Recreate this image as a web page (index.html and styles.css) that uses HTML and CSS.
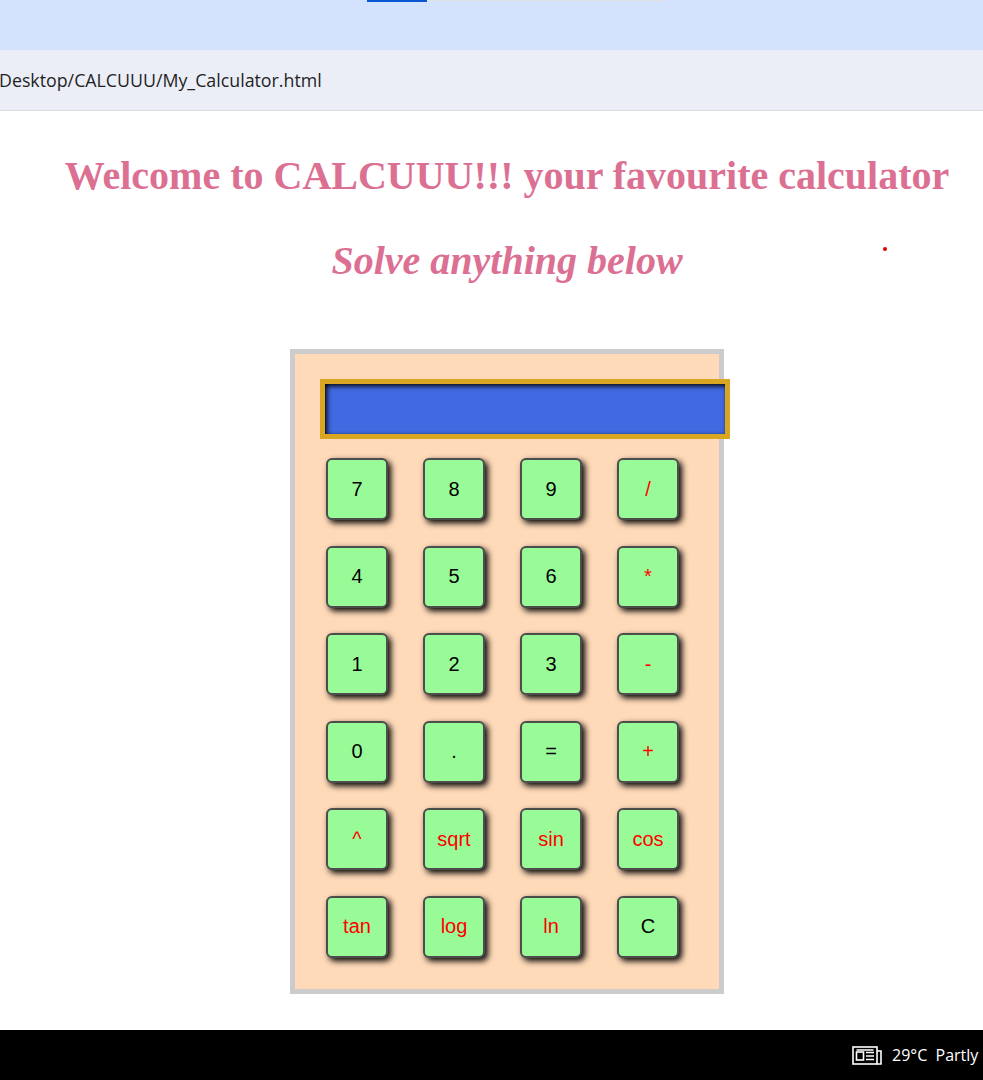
FILE: index.html
```html
<!DOCTYPE html>
<html>
<head>
<meta charset="utf-8">
<title>CALCUUU</title>
<link rel="stylesheet" href="styles.css">
</head>
<body>
<div class="tabstrip">
  <span class="tab-active"></span><span class="tab-rest"></span>
</div>
<div class="addressbar">
  <span class="url">Desktop/CALCUUU/My_Calculator.html</span>
</div>
<main class="page">
  <span class="dot"></span>
  <h1 class="title">Welcome to CALCUUU!!! your favourite calculator</h1>
  <h2 class="subtitle">Solve anything below</h2>
  <div class="calc">
    <div class="display"></div>
    <div class="keys">
      <button class="key">7</button>
      <button class="key">8</button>
      <button class="key">9</button>
      <button class="key op">/</button>
      <button class="key">4</button>
      <button class="key">5</button>
      <button class="key">6</button>
      <button class="key op">*</button>
      <button class="key">1</button>
      <button class="key">2</button>
      <button class="key">3</button>
      <button class="key op">-</button>
      <button class="key">0</button>
      <button class="key">.</button>
      <button class="key">=</button>
      <button class="key op">+</button>
      <button class="key op">^</button>
      <button class="key op">sqrt</button>
      <button class="key op">sin</button>
      <button class="key op">cos</button>
      <button class="key op">tan</button>
      <button class="key op">log</button>
      <button class="key op">ln</button>
      <button class="key">C</button>
    </div>
  </div>
</main>
<footer class="taskbar">
  <svg class="news" width="30" height="19" viewBox="0 0 30 19" fill="none" stroke="#fff" stroke-width="1.6">
    <rect x="1" y="1" width="24" height="17"/>
    <path d="M25 5h4v13h-4"/>
    <rect x="4.5" y="6" width="7" height="8"/>
    <path d="M14 6.5h8M14 10h8M14 13.5h8M4.5 4h17"/>
  </svg>
  <span class="weather">29°C&nbsp; Partly</span>
</footer>
</body>
</html>
```
FILE: styles.css
```css
html, body {
  margin: 0;
  padding: 0;
  background: #fff;
  overflow: hidden;
}
.tabstrip {
  height: 50px;
  background: #d3e3fd;
  display: flex;
  align-items: flex-start;
  padding-left: 367px;
  box-sizing: border-box;
}
.tab-active {
  width: 60px;
  height: 2px;
  background: #0b57d0;
}
.tab-rest {
  width: 238px;
  height: 1px;
  background: #e3e3e3;
}
.addressbar {
  height: 60px;
  background: #ebeef7;
  border-bottom: 1px solid #dadce0;
  display: flex;
  align-items: center;
}
.url {
  font-family: "Open Sans", "Noto Sans", sans-serif;
  font-size: 17.8px;
  color: #1f1f1f;
  margin-left: -1px;
  margin-top: -1px;
}
.page {
  position: relative;
  height: 919px;
  padding-left: 31px;
  box-sizing: border-box;
  overflow: hidden;
}
.dot {
  position: absolute;
  left: 883px;
  top: 136px;
  width: 4px;
  height: 4px;
  border-radius: 50%;
  background: #e00000;
}
.title, .subtitle {
  font-family: "Liberation Serif", "Times New Roman", serif;
  color: #db7093;
  text-align: center;
  font-size: 40px;
  line-height: 48px;
  font-weight: bold;
  margin: 0;
}
.title {
  padding-top: 41px;
}
.subtitle {
  font-style: italic;
  margin-top: 37px;
}
.calc {
  width: 434px;
  height: 645px;
  margin: 64px auto 0;
  border: 5px solid #cccccc;
  background: #ffdab9;
  padding: 25px 0 0 25px;
  box-sizing: border-box;
}
.display {
  width: 410px;
  height: 60px;
  box-sizing: border-box;
  border: 5px solid #daa520;
  background: #4169e1;
  box-shadow: inset 2px 2px 5px #000;
  margin-bottom: 19px;
}
.keys {
  display: grid;
  grid-template-columns: repeat(4, 62px);
  grid-auto-rows: 62px;
  column-gap: 35px;
  row-gap: 25.6px;
  padding-left: 6px;
}
.key {
  font-family: "Liberation Sans", Arial, sans-serif;
  font-size: 20px;
  color: #000;
  background: #98fb98;
  border: 2px solid #4d4d4d;
  border-radius: 6px;
  box-shadow: 3px 3px 6px #000;
  padding: 0;
  margin: 0;
}
.key.op {
  color: #ff0000;
}
.taskbar {
  height: 50px;
  background: #000;
  display: flex;
  align-items: center;
  padding-left: 852px;
  box-sizing: border-box;
  gap: 10px;
  white-space: nowrap;
}
.news {
  flex: none;
  margin-top: 1px;
}
.weather {
  font-family: "Open Sans", "Noto Sans", sans-serif;
  font-size: 16px;
  color: #fff;
}
```
